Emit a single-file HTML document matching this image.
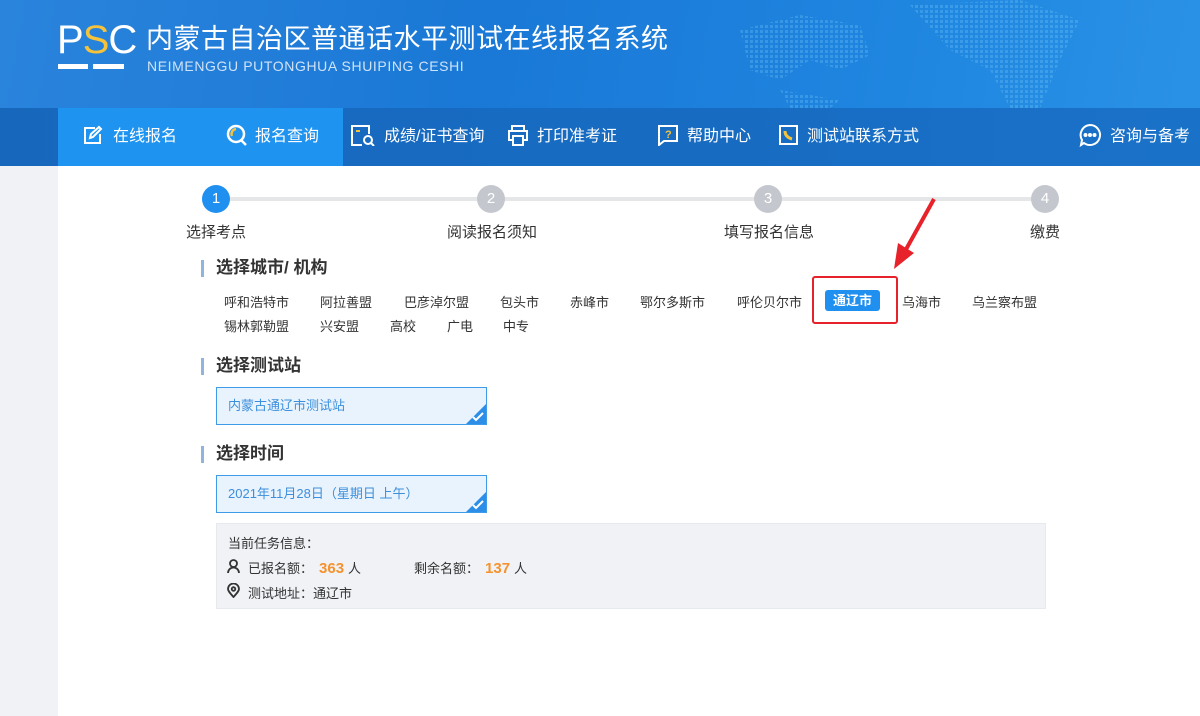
<!DOCTYPE html>
<html><head><meta charset="utf-8">
<style>
*{margin:0;padding:0;box-sizing:border-box}
body{width:1200px;height:716px;overflow:hidden;background:#f0f2f5;font-family:"Liberation Sans","Noto Sans CJK SC",sans-serif;position:relative}
.a{position:absolute}
#hdr{left:0;top:0;width:1200px;height:108px;background:linear-gradient(100deg,#2a84dc 0%,#1a78d6 40%,#1f86e0 75%,#2a92e6 100%)}
#nav{left:0;top:108px;width:1200px;height:58px;background:linear-gradient(90deg,#1768bd,#176cc2 60%,#1a72c8)}
#act{left:58px;top:108px;width:285px;height:58px;background:#1f93f0}
.ni{position:absolute;top:108px;height:58px;line-height:58px;color:#fff;font-size:16px;white-space:nowrap}
#main{left:58px;top:166px;width:1142px;height:550px;background:#fff}
.step{position:absolute;top:185px;width:28px;height:28px;border-radius:50%;background:#c4c8ce;color:#fff;text-align:center;line-height:28px;font-size:15px}
.sl{position:absolute;top:221px;font-size:15px;color:#333;white-space:nowrap}
.h{position:absolute;left:201px;font-size:17px;font-weight:bold;color:#333;padding-left:15px;line-height:20px}
.h:before{content:"";position:absolute;left:0;top:2px;width:3px;height:17px;background:#8fb4e0}
.c{position:absolute;font-size:13px;color:#333;white-space:nowrap}
.box{position:absolute;left:216px;width:271px;height:38px;border:1px solid #3d9be9;background:#e8f3fd;color:#3d8fdc;font-size:13px;line-height:36px;padding-left:11px;overflow:hidden}
.box i{position:absolute;right:-1px;bottom:-1px;width:0;height:0;border-left:22px solid transparent;border-bottom:22px solid #2d8ee8}
.box svg{position:absolute;right:2px;bottom:2px}
</style></head><body>
<div id="hdr" class="a">
 <svg class="a" style="left:720px;top:0" width="480" height="108" opacity=".35">
  <defs><pattern id="d" width="5" height="5" patternUnits="userSpaceOnUse"><rect width="3" height="3" fill="#6cc0f5"/></pattern></defs>
  <path d="M20 30 L80 15 L140 25 L150 55 L120 70 L90 60 L60 80 L30 70Z M190 5 L300 0 L360 20 L340 60 L320 108 L290 108 L270 70 L230 50Z M60 90 L120 100 L110 108 L70 108Z" fill="url(#d)"/>
 </svg>
 <div class="a" style="left:57px;top:18px;font-size:40px;color:#fff;letter-spacing:-1px;line-height:44px">P<span style="color:#f5c33b">S</span>C</div>
 <div class="a" style="left:58px;top:64px;width:30px;height:5px;background:#fff"></div>
 <div class="a" style="left:93px;top:64px;width:31px;height:5px;background:#fff"></div>
 <div class="a" style="left:146px;top:22px;font-size:27px;color:#fff;line-height:34px;letter-spacing:0.5px">内蒙古自治区普通话水平测试在线报名系统</div>
 <div class="a" style="left:147px;top:58px;font-size:14px;color:#cfe3f7;letter-spacing:0.6px">NEIMENGGU PUTONGHUA SHUIPING CESHI</div>
</div>
<div id="nav" class="a"></div>
<div id="act" class="a"></div>
<div class="ni" style="left:83px"><svg width="20" height="20" style="vertical-align:-4px;margin-right:10px" fill="none" stroke="#fff" stroke-width="2"><path d="M12 3H2v15h15V9"/><path d="M7 13l1-4 8-7 2 2-8 8z"/></svg>在线报名</div>
<div class="ni" style="left:226px"><svg width="22" height="22" style="vertical-align:-5px;margin-right:7px" fill="none" stroke-width="2.5"><circle cx="10" cy="10" r="8" stroke="#fff"/><path d="M6 12a5 5 0 0 1 4-7" stroke="#f5c33b"/><path d="M15 16l5 5" stroke="#fff"/></svg>报名查询</div>
<div class="ni" style="left:350px"><svg width="26" height="22" style="vertical-align:-5px;margin-right:8px" fill="none" stroke="#fff" stroke-width="2"><path d="M12 21H2V2h17v8"/><path d="M6 7h4" stroke="#f5c33b"/><circle cx="18" cy="16" r="4"/><path d="M21 19l3 3"/></svg>成绩/证书查询</div>
<div class="ni" style="left:507px"><svg width="22" height="22" style="vertical-align:-5px;margin-right:8px" fill="none" stroke="#fff" stroke-width="2"><path d="M5 7V2h12v5M5 16H2V7h18v9h-3M6 12h10v9H6z"/></svg>打印准考证</div>
<div class="ni" style="left:657px"><svg width="22" height="22" style="vertical-align:-5px;margin-right:8px" fill="none" stroke="#fff" stroke-width="2"><path d="M2 2h18v15H7l-5 4z"/><text x="8" y="14" font-size="11" fill="#f5c33b" stroke="none" font-weight="bold">?</text></svg>帮助中心</div>
<div class="ni" style="left:777px"><svg width="22" height="22" style="vertical-align:-5px;margin-right:8px" fill="none" stroke="#fff" stroke-width="2"><path d="M3 2h17v18H3z"/><path d="M8 7q0 6 7 8" stroke="#f5c33b" stroke-width="3"/></svg>测试站联系方式</div>
<div class="ni" style="left:1078px"><svg width="24" height="24" style="vertical-align:-6px;margin-right:8px" fill="none" stroke="#fff" stroke-width="2"><path d="M12 2a10 10 0 1 1-6 18l-3 2 1-5A10 10 0 0 1 12 2z"/><circle cx="7.5" cy="12" r="1" fill="#fff"/><circle cx="12" cy="12" r="1" fill="#fff"/><circle cx="16.5" cy="12" r="1" fill="#fff"/></svg>咨询与备考</div>

<div id="main" class="a"></div>
<div class="a" style="left:216px;top:197px;width:830px;height:4px;background:#e5e6e8"></div>
<div class="step" style="left:202px;background:#1f8ff0">1</div>
<div class="step" style="left:477px">2</div>
<div class="step" style="left:754px">3</div>
<div class="step" style="left:1031px">4</div>
<div class="sl" style="left:186px">选择考点</div>
<div class="sl" style="left:447px">阅读报名须知</div>
<div class="sl" style="left:724px">填写报名信息</div>
<div class="sl" style="left:1030px">缴费</div>

<svg class="a" style="left:890px;top:195px" width="50" height="80"><path d="M44 4 L14 58" stroke="#e8222a" stroke-width="4"/><path d="M4 74 L8 48 L24 58Z" fill="#e8222a"/></svg>

<div class="h" style="top:258px">选择城市/ 机构</div>
<div class="c" style="left:224px;top:292px">呼和浩特市</div>
<div class="c" style="left:320px;top:292px">阿拉善盟</div>
<div class="c" style="left:404px;top:292px">巴彦淖尔盟</div>
<div class="c" style="left:500px;top:292px">包头市</div>
<div class="c" style="left:570px;top:292px">赤峰市</div>
<div class="c" style="left:640px;top:292px">鄂尔多斯市</div>
<div class="c" style="left:737px;top:292px">呼伦贝尔市</div>
<div class="a" style="left:812px;top:276px;width:86px;height:48px;border:2px solid #e8222a;border-radius:3px"></div>
<div class="a" style="left:825px;top:290px;width:55px;height:21px;background:#1f8ff0;border-radius:3px;color:#fff;font-size:13px;font-weight:bold;text-align:center;line-height:21px">通辽市</div>
<div class="c" style="left:902px;top:292px">乌海市</div>
<div class="c" style="left:972px;top:292px">乌兰察布盟</div>
<div class="c" style="left:224px;top:316px">锡林郭勒盟</div>
<div class="c" style="left:320px;top:316px">兴安盟</div>
<div class="c" style="left:390px;top:316px">高校</div>
<div class="c" style="left:447px;top:316px">广电</div>
<div class="c" style="left:503px;top:316px">中专</div>

<div class="h" style="top:356px">选择测试站</div>
<div class="box" style="top:387px">内蒙古通辽市测试站<i></i><svg width="12" height="10" fill="none" stroke="#fff" stroke-width="2"><path d="M1 5l3 3 7-7"/></svg></div>
<div class="h" style="top:444px">选择时间</div>
<div class="box" style="top:475px">2021年11月28日（星期日 上午）<i></i><svg width="12" height="10" fill="none" stroke="#fff" stroke-width="2"><path d="M1 5l3 3 7-7"/></svg></div>

<div class="a" style="left:216px;top:523px;width:830px;height:86px;background:#f0f2f6;border:1px solid #e6e9ee"></div>
<div class="c" style="left:228px;top:533px">当前任务信息：</div>
<svg class="a" style="left:227px;top:559px" width="13" height="14" fill="none" stroke="#333" stroke-width="1.8"><circle cx="6.5" cy="4.5" r="3.5"/><path d="M1 14a5.5 5.5 0 0 1 11 0"/></svg>
<div class="c" style="left:248px;top:558px">已报名额：<b style="color:#f5922e;font-size:15px;margin:0 4px 0 6px">363</b>人</div>
<div class="c" style="left:414px;top:558px">剩余名额：<b style="color:#f5922e;font-size:15px;margin:0 4px 0 6px">137</b>人</div>
<svg class="a" style="left:227px;top:583px" width="13" height="15" fill="none" stroke="#333" stroke-width="1.8"><path d="M6.5 14C2 9 1 7.5 1 6a5.5 5.5 0 0 1 11 0c0 1.5-1 3-5.5 8z"/><circle cx="6.5" cy="6" r="1.8"/></svg>
<div class="c" style="left:248px;top:583px">测试地址：通辽市</div>
</body></html>
